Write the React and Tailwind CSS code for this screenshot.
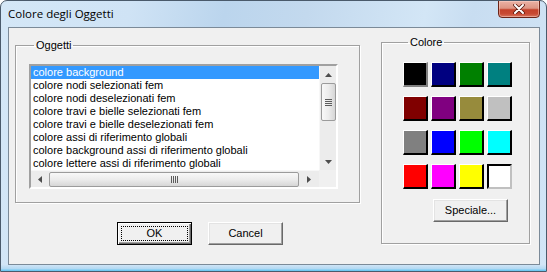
import React from 'react';

const items = [
  'colore background',
  'colore nodi selezionati fem',
  'colore nodi deselezionati fem',
  'colore travi e bielle selezionati fem',
  'colore travi e bielle deselezionati fem',
  'colore assi di riferimento globali',
  'colore background assi di riferimento globali',
  'colore lettere assi di riferimento globali',
];

const swatches = [
  '#000000', '#000080', '#008000', '#008080',
  '#800000', '#800080', '#978b3c', '#c0c0c0',
  '#808080', '#0000ff', '#00ff00', '#00ffff',
  '#ff0000', '#ff00ff', '#ffff00', '#ffffff',
];

const Arrow = ({ dir }) => {
  const pts = {
    up: '0,4 3.5,0 7,4',
    down: '0,0 3.5,4 7,0',
    left: '4,0 0,3.5 4,7',
    right: '0,0 4,3.5 0,7',
  }[dir];
  const vertical = dir === 'up' || dir === 'down';
  return (
    <svg width={vertical ? 7 : 4} height={vertical ? 4 : 7} viewBox={vertical ? '0 0 7 4' : '0 0 4 7'}>
      <polygon points={pts} fill="#4d4d4d" />
    </svg>
  );
};

const Swatch = ({ color, index }) => {
  if (index === 15) {
    return (
      <div className="w-[25px] h-[25px] border-2 border-t-black border-l-black border-r-[#c0c0c0] border-b-[#c0c0c0]" style={{ background: color }} />
    );
  }
  const shadow = index === 0 ? 'border-r-[#808080] border-b-[#808080]' : 'border-r-black border-b-black';
  return (
    <div
      className={`w-[25px] h-[25px] border-t border-l border-t-white border-l-white border-r-2 border-b-2 ${shadow}`}
      style={{ background: color }}
    />
  );
};

const App = () => {
  return (
    <div
      className="w-[547px] h-[272px] overflow-hidden rounded-t-[7px] border border-[#4a5a6b] bg-[linear-gradient(100deg,#d4e7f7_0%,#cfe3f5_22%,#bbd5ed_38%,#c3d9ee_52%,#d3e6f6_72%,#c8ddf1_80%,#d2e5f6_100%)] flex flex-col"
      style={{ fontFamily: '"Liberation Sans", Arial, sans-serif' }}
    >
      {/* title bar */}
      <div className="h-[26px] flex items-start justify-between">
        <div className="pl-[7px] pt-[6px] text-[11.5px] leading-[14px] text-black" style={{ fontFamily: '"Open Sans", "Noto Sans", sans-serif' }}>
          Colore degli Oggetti
        </div>
        <div className="-mt-px mr-[6px] w-[42px] h-[18px] rounded-b-[4px] border border-[#6b2418] bg-[linear-gradient(180deg,#ebb2a5_0%,#dd9584_45%,#c4412a_55%,#c84a33_80%,#d8765f_100%)] flex items-center justify-center shadow-[inset_0_0_0_1px_rgba(255,220,210,0.45)]">
          <svg width="12" height="10" viewBox="0 0 12 10">
            <path d="M2 1 L10 9 M10 1 L2 9" stroke="#5a1a10" strokeWidth="3.6" strokeLinecap="round" />
            <path d="M2 1 L10 9 M10 1 L2 9" stroke="#ffffff" strokeWidth="2" strokeLinecap="round" />
          </svg>
        </div>
      </div>

      {/* client area */}
      <div className="ml-[7px] w-[532px] h-[238px] border border-[#7b8a98] bg-[#f0f0f0] flex items-start text-[11px] leading-[13px] text-black">
        {/* left column */}
        <div className="ml-[6px] flex flex-col">
          <fieldset className="mt-[11px] w-[345px] border border-[#a0a0a0] shadow-[1px_1px_0_#fff,inset_1px_1px_0_#fff] pl-[13px] pt-[12px] pb-[13px]">
            <legend className="ml-[5px] px-[2px] leading-[13px]">Oggetti</legend>
            {/* listbox */}
            <div className="w-[309px] h-[125px] border-2 border-t-[#a0a0a0] border-l-[#a0a0a0] border-r-white border-b-white">
              <div className="w-full h-full bg-white flex flex-col">
                <div className="flex h-[104px]">
                  <div className="w-[288px] overflow-hidden">
                    {items.map((t, i) => (
                      <div
                        key={t}
                        className={`h-[13px] pl-[2px] whitespace-nowrap leading-[13px] ${i === 0 ? 'bg-[#3399ff] text-white' : 'text-black'}`}
                      >
                        {t}
                      </div>
                    ))}
                  </div>
                  {/* vertical scrollbar */}
                  <div className="w-[17px] h-full bg-[#ececec] border-l border-[#f7f7f7] flex flex-col items-center">
                    <div className="h-[17px] w-full flex items-center justify-center">
                      <Arrow dir="up" />
                    </div>
                    <div className="w-[15px] h-[38px] rounded-[2px] border border-[#9b9b9b] bg-[linear-gradient(90deg,#f8f8f8_0%,#ececec_50%,#d6d6d6_100%)] flex flex-col items-center justify-center gap-[1px]">
                      <div className="w-[7px] h-px bg-[#5c5c5c]" />
                      <div className="w-[7px] h-px bg-[#5c5c5c]" />
                      <div className="w-[7px] h-px bg-[#5c5c5c]" />
                      <div className="w-[7px] h-px bg-[#5c5c5c]" />
                    </div>
                    <div className="flex-1" />
                    <div className="h-[17px] w-full flex items-center justify-center">
                      <Arrow dir="down" />
                    </div>
                  </div>
                </div>
                {/* horizontal scrollbar */}
                <div className="flex h-[17px]">
                  <div className="w-[288px] h-full bg-[#ececec] border-t border-[#f7f7f7] flex items-center">
                    <div className="w-[17px] h-full flex items-center justify-center">
                      <Arrow dir="left" />
                    </div>
                    <div className="ml-px w-[250px] h-[15px] rounded-[2px] border border-[#9b9b9b] bg-[linear-gradient(180deg,#f8f8f8_0%,#ececec_50%,#d6d6d6_100%)] flex items-center justify-center gap-[1px]">
                      <div className="w-px h-[7px] bg-[#5c5c5c]" />
                      <div className="w-px h-[7px] bg-[#5c5c5c]" />
                      <div className="w-px h-[7px] bg-[#5c5c5c]" />
                      <div className="w-px h-[7px] bg-[#5c5c5c]" />
                    </div>
                    <div className="flex-1 h-full flex items-center justify-center">
                      <Arrow dir="right" />
                    </div>
                  </div>
                  <div className="w-[17px] h-full bg-[#f0f0f0]" />
                </div>
              </div>
            </div>
          </fieldset>

          {/* buttons */}
          <div className="mt-[19px] ml-[102px] flex gap-[16px]">
            <button className="w-[75px] h-[23px] border border-black bg-[#f0f0f0] shadow-[inset_1px_1px_0_#fff,inset_-1px_-1px_0_#696969,inset_-2px_-2px_0_#a0a0a0] outline-1 outline-dotted outline-black outline-offset-[-5px] text-[11px] leading-[13px]">
              OK
            </button>
            <button className="w-[75px] h-[23px] border border-t-white border-l-white border-r-[#696969] border-b-[#696969] bg-[#f0f0f0] shadow-[inset_-1px_-1px_0_#a0a0a0,inset_1px_1px_0_#e3e3e3] text-[11px] leading-[13px]">
              Cancel
            </button>
          </div>
        </div>

        {/* Colore group */}
        <fieldset className="mt-[8px] ml-[21px] w-[149px] border border-[#a0a0a0] shadow-[1px_1px_0_#fff,inset_1px_1px_0_#fff] pl-[21px] pt-[13px] pb-[21px]">
          <legend className="ml-[5px] px-[2px] leading-[13px]">Colore</legend>
          <div className="grid grid-cols-[repeat(4,25px)] gap-x-[3px] gap-y-[9px]">
            {swatches.map((c, i) => (
              <Swatch key={i} color={c} index={i} />
            ))}
          </div>
          <button className="mt-[10px] ml-[30px] w-[75px] h-[23px] border border-t-white border-l-white border-r-[#696969] border-b-[#696969] bg-[#f0f0f0] shadow-[inset_-1px_-1px_0_#a0a0a0,inset_1px_1px_0_#e3e3e3] text-[11px] leading-[13px]">
            Speciale...
          </button>
        </fieldset>
      </div>

      {/* bottom frame */}
      <div className="flex-1 bg-[linear-gradient(180deg,#cfe4f6_0%,#b4d9f3_60%,#5cc3f0_100%)]" />
    </div>
  );
};

export default App;
